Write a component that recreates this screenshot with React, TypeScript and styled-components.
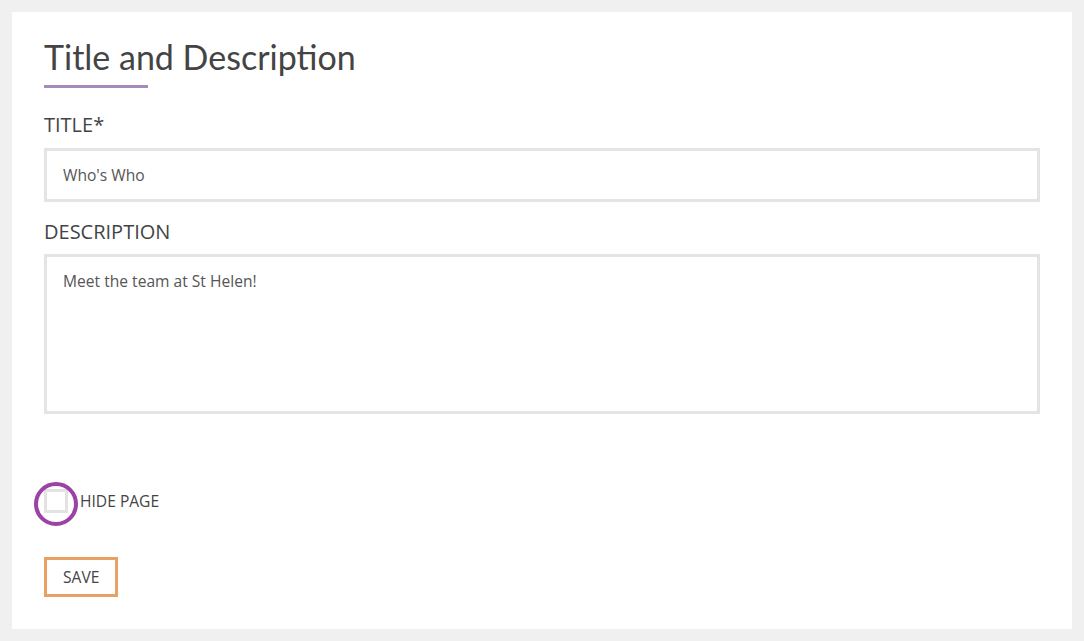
import { createGlobalStyle, styled } from 'styled-components';

const GlobalStyle = createGlobalStyle`
  html, body {
    margin: 0;
    padding: 0;
    background: #f0f0f0;
  }
  * {
    box-sizing: border-box;
  }
`;

const Page = styled.div`
  padding: 12px;
  height: 641px;
`;

const Panel = styled.form`
  display: flex;
  flex-direction: column;
  align-items: flex-start;
  background: #ffffff;
  height: 617px;
  padding: 24px 32px 0 32px;
  font-family: 'Open Sans', sans-serif;
  color: #444444;
`;

const Heading = styled.h1`
  margin: 0;
  font-family: Lato, 'Open Sans', sans-serif;
  font-weight: 400;
  font-size: 34px;
  line-height: 42px;
  color: #444444;
`;

const Underline = styled.div`
  width: 104px;
  height: 3px;
  margin-top: 7px;
  background: #a68bb9;
`;

const Label = styled.label<{ $top: number }>`
  margin-top: ${(p) => p.$top}px;
  font-size: 20px;
  line-height: 26px;
  text-transform: uppercase;
  color: #444444;
`;

const TextInput = styled.input`
  width: 100%;
  height: 54px;
  margin-top: 10px;
  border: 3px solid #e4e4e4;
  padding: 0 16px;
  font-family: 'Open Sans', sans-serif;
  font-size: 15.6px;
  color: #555555;
  outline: none;
`;

const TextArea = styled.textarea`
  width: 100%;
  height: 160px;
  margin-top: 9px;
  border: 3px solid #e4e4e4;
  padding: 13px 16px;
  font-family: 'Open Sans', sans-serif;
  font-size: 15.6px;
  line-height: 22px;
  color: #555555;
  resize: none;
  outline: none;
`;

const CheckRow = styled.label`
  display: flex;
  align-items: center;
  gap: 12px;
  margin-top: 75px;
  font-size: 15.6px;
  text-transform: uppercase;
  color: #444444;
  cursor: pointer;
`;

const CheckBox = styled.span`
  position: relative;
  display: block;
  width: 24px;
  height: 24px;
  border: 3px solid #e3e3e3;
  background: #ffffff;
`;

const Highlight = styled.span`
  position: absolute;
  left: -13px;
  top: -10px;
  width: 44px;
  height: 44px;
  border: 4px solid #9c42a6;
  border-radius: 50%;
`;

const SaveButton = styled.button`
  margin-top: 44px;
  height: 40px;
  padding: 0 16px;
  border: 3px solid #e8a063;
  background: #ffffff;
  font-family: 'Open Sans', sans-serif;
  font-size: 15.6px;
  text-transform: uppercase;
  color: #444444;
  cursor: pointer;
`;

const App = () => {
  return (
    <>
      <GlobalStyle />
      <Page>
        <Panel onSubmit={(e) => e.preventDefault()}>
          <Heading>Title and Description</Heading>
          <Underline />
          <Label $top={24} htmlFor="title">
            Title*
          </Label>
          <TextInput id="title" defaultValue="Who's Who" />
          <Label $top={17} htmlFor="description">
            Description
          </Label>
          <TextArea id="description" defaultValue="Meet the team at St Helen!" />
          <CheckRow>
            <CheckBox>
              <Highlight />
            </CheckBox>
            Hide page
          </CheckRow>
          <SaveButton type="submit">Save</SaveButton>
        </Panel>
      </Page>
    </>
  );
};

export default App;
